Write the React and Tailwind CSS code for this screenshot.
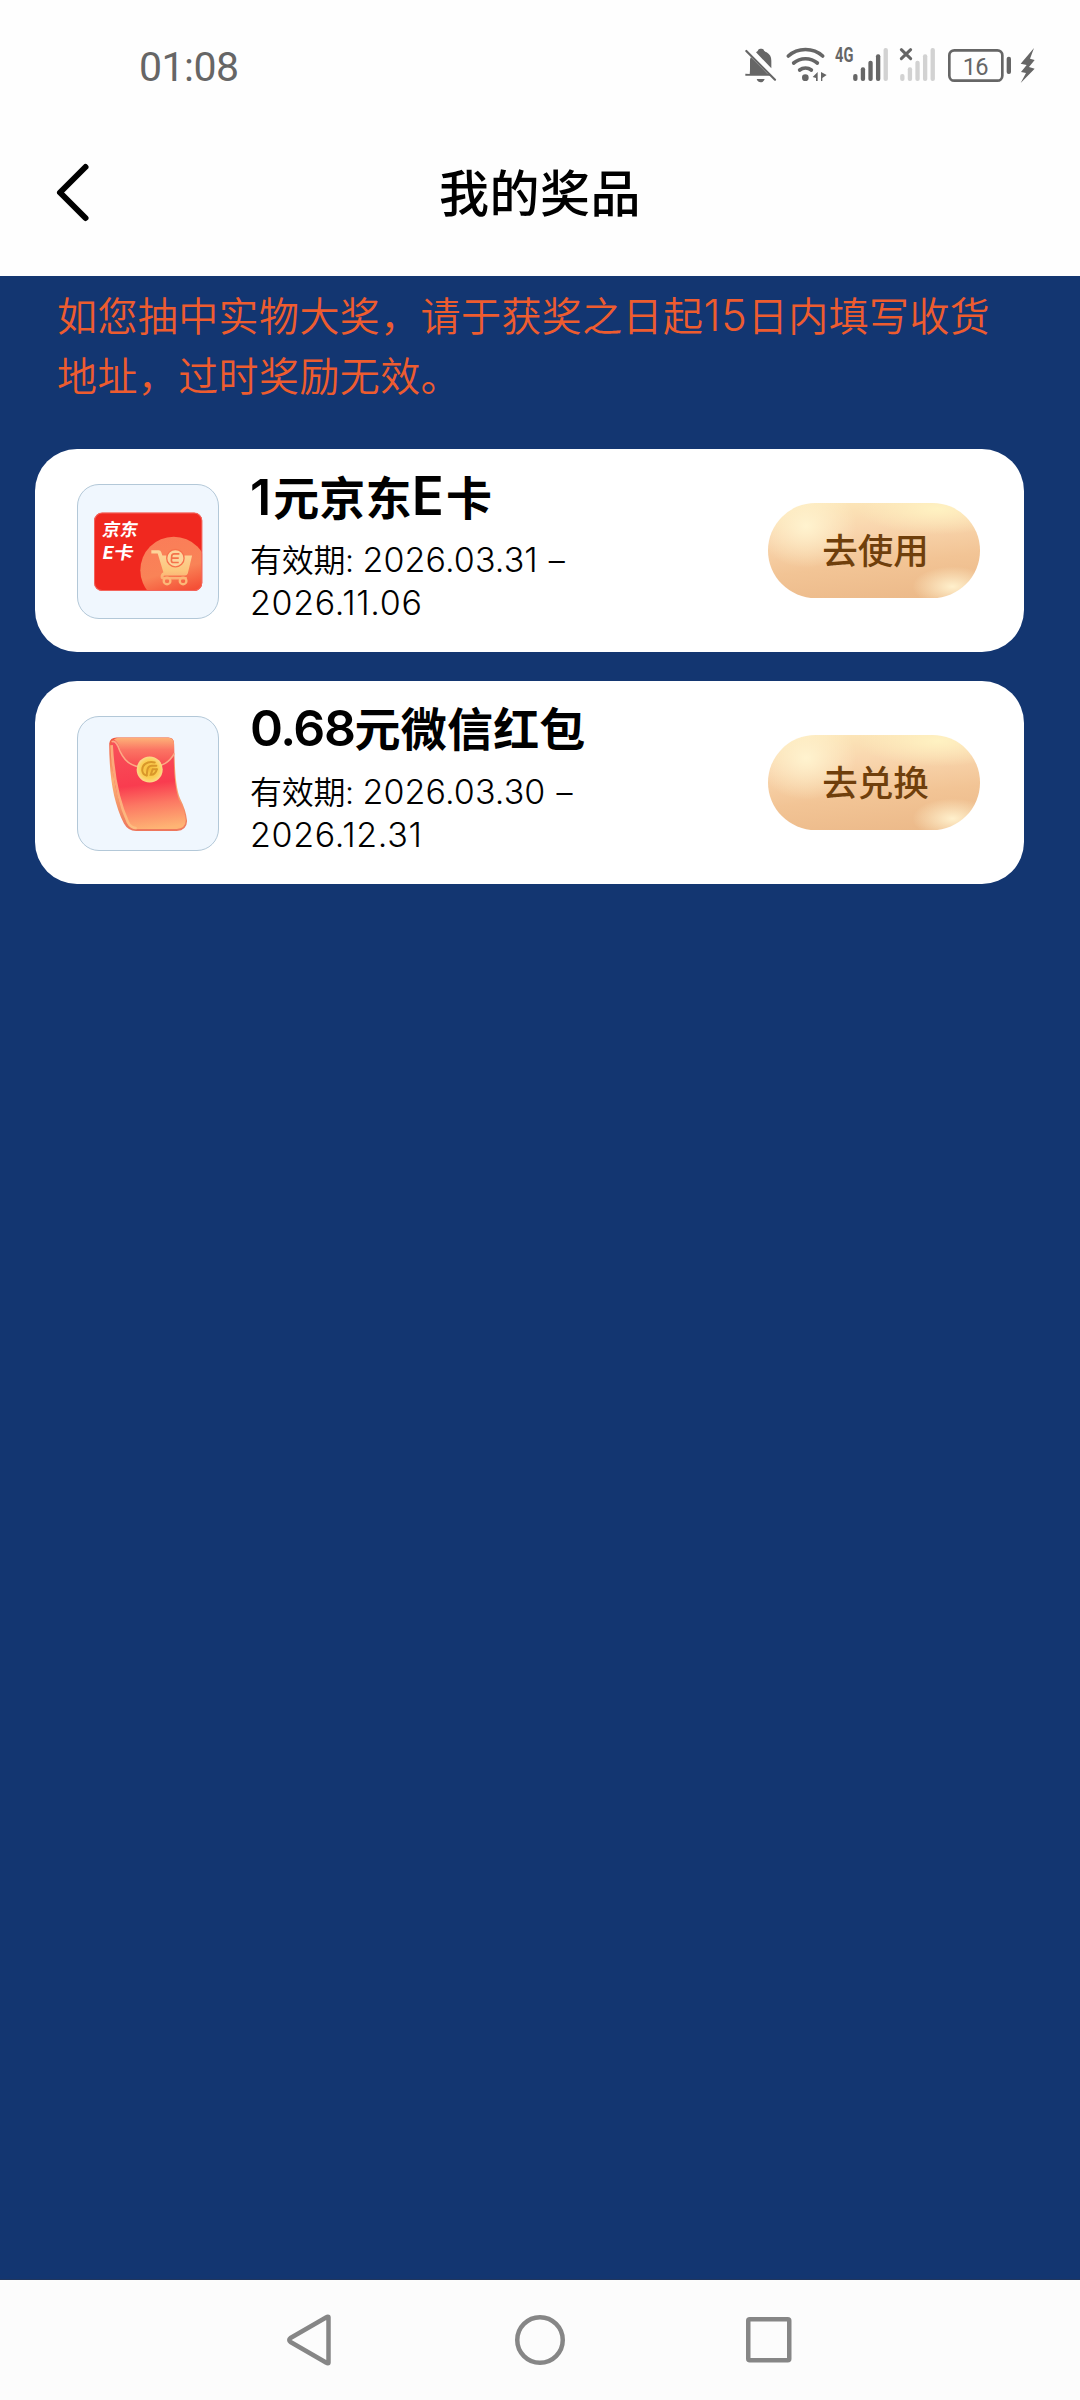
function BellOff() {
  return (
    <svg className="h-[40px] w-[40px]" viewBox="75 45 120 120" fill="#666">
      <path d="M89 132C90 126 90 120 90 112L90 92C90 88 91 84 93 82L142 131H150V137H76V131Z" />
      <path d="M108 67C111 64 114 63 115 59C118 55 128 55 131 59C132 63 136 65 140 67C150 73 154 81 154 92V115Z" />
      <path d="M110 147H134C130 160 114 160 110 147Z" />
      <path d="M79 63L165 149" stroke="#666" strokeWidth="6.5" strokeLinecap="round" />
    </svg>
  );
}

function Wifi() {
  return (
    <svg className="h-[40px] w-[49px]" viewBox="195 45 147 120" fill="none" stroke="#666" strokeWidth="11" strokeLinecap="round">
      <path d="M205 78C233 52 280 52 308 78" />
      <path d="M221 99C241 82 272 82 292 99" />
      <path d="M239 120C249 112 264 112 274 120" />
      <circle cx="256" cy="143" r="10" fill="#666" stroke="none" />
      <path d="M278 141L293 126V153H288V144ZM303 126L320 135L307 144V153H303Z" fill="#666" stroke="none" />
    </svg>
  );
}

function Bars({ x, colors }) {
  const tops = [132, 112, 92, 73, 54];
  return tops.map((top, i) => (
    <rect key={top} x={x + i * 22.8} y={top} width="13" height={153 - top} rx="6" fill={colors[i]} />
  ));
}

function Signal4G() {
  return (
    <svg className="h-[40px] w-[65px]" viewBox="342 45 195 120">
      <text x="345" y="97" textLength="55" lengthAdjust="spacingAndGlyphs" fontSize="58" fontWeight="700" fill="#666" className="font-['Roboto',sans-serif]">4G</text>
      <Bars x={399.5} colors={["#666", "#666", "#666", "#666", "#d2d2d2"]} />
    </svg>
  );
}

function SignalNone() {
  return (
    <svg className="h-[40px] w-[48px]" viewBox="537 45 144 120">
      <path d="M544 59L572 86M572 59L544 86" stroke="#666" strokeWidth="9" strokeLinecap="round" />
      <Bars x={540.5} colors={["#d2d2d2", "#d2d2d2", "#d2d2d2", "#d2d2d2", "#d2d2d2"]} />
    </svg>
  );
}

function Battery() {
  return (
    <svg className="h-[40px] w-[69px]" viewBox="681 45 207 120">
      <rect x="688" y="61" width="159" height="91" rx="15" fill="none" stroke="#666" strokeWidth="8" />
      <rect x="860" y="80" width="13" height="52" rx="6" fill="#666" />
      <text x="728" y="134" textLength="78" fontSize="71" fill="#666" className="font-['Roboto',sans-serif]">16</text>
    </svg>
  );
}

function Bolt() {
  return (
    <svg className="h-[40px] w-[24px]" viewBox="888 45 72 120">
      <path d="M942 54L902 101L920 105L903 126L918 129L902 159L944 116L927 111L944 90L930 86Z" fill="#666" />
    </svg>
  );
}

function StatusBar() {
  return (
    <div className="flex h-[130px] items-center justify-between pr-10 pl-[139px] text-[#666]">
      <span className="mt-1 font-['Roboto',sans-serif] text-[41px] leading-none tracking-[-0.5px]">01:08</span>
      <div className="flex items-center">
        <BellOff />
        <Wifi />
        <Signal4G />
        <SignalNone />
        <Battery />
        <Bolt />
      </div>
    </div>
  );
}

function Header() {
  return (
    <header className="grid h-[146px] grid-cols-[1fr_auto_1fr] items-start">
      <svg className="mt-[30px] ml-[51px] h-[64px] w-[44px]" viewBox="0 0 44 64" fill="none" stroke="#000" strokeWidth="6" strokeLinecap="round" strokeLinejoin="round">
        <path d="M34.500 7L9 32.500L34.500 58" />
      </svg>
      <h1 className="mt-[39px] text-[50px] leading-[50px] font-medium tracking-[0.5px] text-black">我的奖品</h1>
    </header>
  );
}

function JdCardArt() {
  return (
    <svg className="h-full w-full" viewBox="55 45 418 398">
      <defs>
        <clipPath id="jdClip"><rect x="103" y="128" width="323" height="234" rx="24" /></clipPath>
        <linearGradient id="jdCircle" x1="0" y1="0" x2="0.3" y2="1">
          <stop offset="0" stopColor="#fb7c59" />
          <stop offset="0.6" stopColor="#f98357" />
          <stop offset="1" stopColor="#f4452f" />
        </linearGradient>
        <linearGradient id="jdCart" x1="0" y1="0" x2="0" y2="1">
          <stop offset="0" stopColor="#fdd59c" />
          <stop offset="0.7" stopColor="#fcc67c" />
          <stop offset="1" stopColor="#fbad74" />
        </linearGradient>
      </defs>
      <rect x="103" y="128" width="323" height="234" rx="24" fill="#f0281f" />
      <circle cx="341" cy="300" r="100" fill="url(#jdCircle)" clipPath="url(#jdClip)" />
      <rect x="104" y="129" width="321" height="232" rx="23" fill="none" stroke="#f4655c" strokeWidth="3" />
      <g className="font-['Noto_Sans_CJK_SC',sans-serif]" fill="#fff" fontWeight="700" fontSize="53">
        <text transform="translate(125 197) skewX(-10)">京东</text>
        <text transform="translate(124 265) skewX(-10)" textLength="94" lengthAdjust="spacingAndGlyphs">E卡</text>
      </g>
      <path d="M274 240H296Q302 240 304 247L307 256H396L383 310Q381 316 375 316H314Q308 317 311 320H380V328H308Q300 326 302 316Q304 308 310 306L293 250H274Z" fill="url(#jdCart)" />
      <circle cx="346" cy="264" r="26" fill="#fdd59c" stroke="#f7724c" strokeWidth="4" />
      <path d="M358 251H342Q336 251 335 257L334 271Q334 277 340 277H356M336 264H356" fill="none" stroke="#f4724a" strokeWidth="5" />
      <g fill="none" stroke="#fcb877" strokeWidth="7">
        <circle cx="321" cy="332" r="10" />
        <circle cx="369" cy="332" r="10" />
      </g>
    </svg>
  );
}

function RedEnvelopeArt() {
  return (
    <svg className="h-full w-full" viewBox="55 51 418 398">
      <defs>
        <linearGradient id="envBody" x1="0.45" y1="0" x2="0.55" y2="1">
          <stop offset="0" stopColor="#f8525a" />
          <stop offset="0.5" stopColor="#f93c4f" />
          <stop offset="0.72" stopColor="#fc7863" />
          <stop offset="1" stopColor="#feb474" />
        </linearGradient>
        <linearGradient id="envFlap" x1="0" y1="0" x2="0" y2="1">
          <stop offset="0" stopColor="#fdb278" />
          <stop offset="0.4" stopColor="#fb7564" />
          <stop offset="1" stopColor="#f8494f" />
        </linearGradient>
        <linearGradient id="envEdge" x1="0" y1="0" x2="0" y2="1">
          <stop offset="0" stopColor="#f0543f" />
          <stop offset="0.45" stopColor="#fbb274" />
          <stop offset="1" stopColor="#ee765c" />
        </linearGradient>
        <radialGradient id="envCoin">
          <stop offset="0" stopColor="#f5b936" />
          <stop offset="0.7" stopColor="#fbcf55" />
          <stop offset="1" stopColor="#fbd98a" />
        </radialGradient>
      </defs>
      <path d="M148 130Q150 112 170 112H325Q342 112 342 130C344 200 346 260 360 295Q378 330 381 362Q380 390 350 392H228Q204 392 192 370C160 305 148 230 148 130Z" fill="url(#envEdge)" />
      <path d="M153 140Q153 118 173 116H325Q340 116 340 132C341 200 343 255 356 297Q374 330 377 360Q376 385 350 386H230Q212 386 201 368C172 305 156 225 153 140Z" fill="url(#envBody)" />
      <path d="M155 135C160 225 176 305 204 366Q212 383 230 384" fill="none" stroke="#fdc285" strokeWidth="8" opacity="0.8" />
      <path d="M162 118Q168 113 178 113H325Q341 114 342 130V160C328 184 312 198 270 203C215 204 192 180 178 140Q173 124 162 118Z" fill="url(#envFlap)" />
      <path d="M155 125Q166 120 174 138C190 184 212 201 260 203C310 201 330 184 343 160" fill="none" stroke="#fca984" strokeWidth="5" />
      <circle cx="269" cy="208" r="39" fill="url(#envCoin)" />
      <g fill="none" stroke="#d9972a" strokeWidth="6" strokeLinecap="round">
        <path d="M284 187C260 182 245 195 247 212Q249 224 260 226" />
        <path d="M289 197H275Q264 198 262 210L260 225" />
        <path d="M291 207H278L272 224Q285 225 291 207" />
      </g>
    </svg>
  );
}

const prizes = [
  { title: ["1", "元京东", "E", "卡"], from: "2026.03.31", to: "2026.11.06", action: "去使用", Art: JdCardArt },
  { title: ["0.68", "元微信红包"], from: "2026.03.30", to: "2026.12.31", action: "去兑换", Art: RedEnvelopeArt },
];

const latinStyle = {
  "1": "text-[50px] pr-[3px] tracking-[-1px]",
  "E": "text-[53px] pr-[2px]",
  "0.68": "text-[50px] tracking-[-1.4px]",
};

function PrizeCard({ title, from, to, action, Art }) {
  return (
    <article className="flex h-[203px] items-start rounded-[42px] bg-white pr-11 pl-[42px]">
      <div className="mt-[35px] h-[135px] w-[142px] shrink-0 overflow-hidden rounded-[22px] border border-[#b3c8d8] bg-[#f0f7fe]">
        <Art />
      </div>
      <div className="ml-[31px] flex-1 text-black">
        <h2 className="mt-[22px] flex h-[50px] items-baseline text-[46px] leading-[50px] font-bold tracking-[0.2px] whitespace-nowrap">
          {title.map((part) => (
            <span key={part} className={latinStyle[part] ? `font-semibold ${latinStyle[part]}` : ""}>{part}</span>
          ))}
        </h2>
        <p className="mt-[18px] text-[32px] leading-[43px] font-[350] whitespace-nowrap">
          <span className="tracking-[-0.3px]">有效期: </span>
          <span className="text-[34px] leading-none font-light tracking-[0.1px]">{from}</span>
          <span className="pl-[2px]"> –</span>
          <br />
          <span className="text-[34px] leading-none font-light tracking-[0.7px]">{to}</span>
        </p>
      </div>
      <button className="mt-[54px] h-[95px] w-[212px] shrink-0 rounded-full bg-[radial-gradient(ellipse_50px_42px_at_18%_24%,#fff3cf_0%,#fff3cf00_100%),radial-gradient(ellipse_80px_26px_at_80%_6%,#fff2c2_0%,#fff2c200_100%),radial-gradient(ellipse_40px_20px_at_87%_88%,#fff0cc_0%,#fff0cc00_100%),linear-gradient(174deg,#fdeabb_0%,#f9d6ae_30%,#f2c495_62%,#ebb888_100%)] pt-[2px] pl-[3px] text-[35.5px] font-medium text-[#6f3f0c]">
        {action}
      </button>
    </article>
  );
}

function NavBar() {
  return (
    <nav className="flex h-[120px] items-center justify-center gap-[174px] bg-[#fcfcfc]">
      <svg className="h-[56px] w-[56px]" viewBox="1 0 56 56" fill="none" stroke="#868686" strokeWidth="4.500" strokeLinejoin="round">
        <path d="M47.500 5.500V50.500Q47.500 52 45 50.500L9.500 30Q7 28 9.500 26L45 5.500Q47.500 4 47.500 5.500Z" />
      </svg>
      <svg className="h-[56px] w-[56px]" viewBox="0 0 56 56" fill="none" stroke="#868686" strokeWidth="4.500">
        <circle cx="28" cy="28" r="22.750" />
      </svg>
      <svg className="h-[56px] w-[56px]" viewBox="1 0 56 56" fill="none" stroke="#868686" strokeWidth="4.500">
        <rect x="7.250" y="7.250" width="41" height="41" rx="1.500" />
      </svg>
    </nav>
  );
}

export default function App() {
  return (
    <div className="flex h-[2400px] w-[1080px] flex-col bg-[#fefefe] font-['Inter','Noto_Sans_CJK_SC',sans-serif]">
      <StatusBar />
      <Header />
      <main className="flex-1 border-b border-[#20365e] bg-[#133671] pt-[11px]">
        <p className="px-[57px] text-[40px] leading-[60px] font-[350] tracking-[0.4px] whitespace-nowrap text-[#ee5c2f]">
          如您抽中实物大奖，请于获奖之日起<span className="text-[43px] leading-none font-light tracking-[1px]">15</span>日内填写收货<br />地址，过时奖励无效。
        </p>
        <section className="mt-[42px] mr-14 ml-[35px] flex flex-col gap-[29px]">
          {prizes.map((prize) => (
            <PrizeCard key={prize.title[0]} {...prize} />
          ))}
        </section>
      </main>
      <NavBar />
    </div>
  );
}
